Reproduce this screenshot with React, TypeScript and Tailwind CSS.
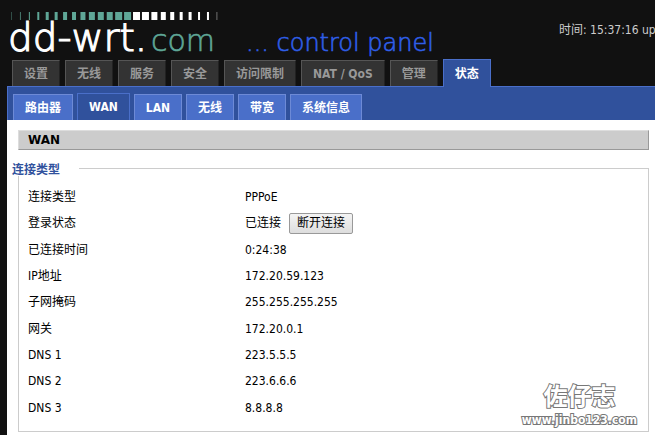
import React from "react";
import clsx from "clsx";

const mainTabs = ["设置", "无线", "服务", "安全", "访问限制", "NAT / QoS", "管理", "状态"];
const subTabs = ["路由器", "WAN", "LAN", "无线", "带宽", "系统信息"];

const rows = [
  { label: "连接类型", value: "PPPoE" },
  { label: "登录状态", value: "已连接", action: "断开连接" },
  { label: "已连接时间", value: "0:24:38" },
  { label: "IP地址", value: "172.20.59.123" },
  { label: "子网掩码", value: "255.255.255.255" },
  { label: "网关", value: "172.20.0.1" },
  { label: "DNS 1", value: "223.5.5.5" },
  { label: "DNS 2", value: "223.6.6.6" },
  { label: "DNS 3", value: "8.8.8.8" },
];

// widths of the bars above the logo, they swell towards the middle
const bars = [1, 1, 1, 2, 3, 3, 4, 4, 5, 6, 6, 6, 7, 7, 7, 7, 6, 5, 4, 3, 3, 2, 2, 1];

const Logo = () => (
  <svg
    className="shrink-0 font-['DejaVu_Sans',sans-serif] font-extralight"
    width="440"
    height="60"
    viewBox="0 0 440 60"
  >
    {bars.map((w, i) => (
      <rect
        key={i}
        x={11.5 + i * 8.93 - w / 2}
        y="12"
        width={w}
        height="8"
        fill={i < 14 ? "#5fa797" : "#fff"}
        opacity={i === 0 || i === 23 ? 0.4 : i === 1 ? 0.7 : 1}
      />
    ))}
    <text x="8" y="51" fontSize="39" fill="#fff" stroke="#fff" strokeWidth="1.2">
      dd-wrt.
    </text>
    <text x="151" y="51" fontSize="30" fill="#5fa797" stroke="#5fa797" strokeWidth="0.6">
      com
    </text>
    <text x="246" y="51" fontSize="24" fill="#2f5fe8" stroke="#2f5fe8" strokeWidth="0.6">
      ... control panel
    </text>
  </svg>
);

const MainNav = () => (
  <ul className="relative pl-3 h-[27px] -mb-px whitespace-nowrap flex items-end gap-[5px]">
    {mainTabs.map((tab) => (
      <li key={tab}>
        <a
          href="#"
          className={clsx(
            "block border-t border-l border-r px-[11px] font-bold",
            tab === "状态"
              ? "h-7 leading-7 bg-[#30519c] border-[#4a6fc9] text-white"
              : "h-[26px] mb-px leading-[26px] bg-[#333] border-t-[#555] border-l-[#555] border-r-[#222] text-[#999]"
          )}
        >
          {tab}
        </a>
      </li>
    ))}
  </ul>
);

const SubNav = () => (
  <ul className="flex items-end gap-1 h-[34px] pl-[5px] bg-[#30519c] border-t border-l border-[#4a6fc9] whitespace-nowrap">
    {subTabs.map((tab) => (
      <li key={tab}>
        <a
          href="#"
          className={clsx(
            "block border-t border-l border-r px-[11px] font-bold text-white",
            tab === "WAN"
              ? "h-[27px] leading-[26px] bg-[#30519c] border-[#4a6fc9]"
              : "h-[26px] leading-[26px] bg-[#4a6fc9] border-[#6d8ad6]"
          )}
        >
          {tab}
        </a>
      </li>
    ))}
  </ul>
);

export default function App() {
  return (
    <div className="relative min-h-screen overflow-hidden bg-[#111] pl-[7px] text-xs font-['DejaVu_Sans_Condensed','Noto_Sans_CJK_SC',sans-serif]">
      <header className="-ml-[7px] flex h-[60px] items-center">
        <Logo />
        <p className="ml-[119px] whitespace-nowrap text-[#ccc]">时间: 15:37:16 up</p>
      </header>
      <nav>
        <div className="-ml-[7px]">
          <MainNav />
        </div>
        <SubNav />
      </nav>
      <main className="min-h-[315px] bg-white pt-2.5 pl-[11px] pr-1.5 pb-1 text-black">
        <h2 className="h-5 border border-t-[#ddd] border-l-[#ddd] border-r-[#999] border-b-[#999] bg-[#ccc] pl-[9px] font-['DejaVu_Sans'] font-bold leading-[19px]">
          WAN
        </h2>
        <fieldset className="mt-2.5 border border-[#ccc] pl-[9px] pb-2.5">
          <legend className="-ml-4 h-4 w-[67px] bg-white font-bold leading-5 text-[#30519c]">连接类型</legend>
          <dl className="grid h-[237px] auto-rows-fr mt-2">
            {rows.map((row) => (
              <div key={row.label} className="flex items-center">
                <dt className="w-[217px] shrink-0">{row.label}</dt>
                <dd className="flex items-center gap-2">
                  {row.value}
                  {row.action && (
                    <button
                      type="button"
                      className="h-[21px] border border-[#999] rounded-xs bg-linear-to-b from-[#f4f4f4] to-[#ddd] px-[7px] leading-[19px]"
                    >
                      {row.action}
                    </button>
                  )}
                </dd>
              </div>
            ))}
          </dl>
        </fieldset>
      </main>
      {/* site mark */}
      <div className="absolute right-[18px] bottom-2 text-center font-bold text-white [-webkit-text-stroke:2px_#777] [paint-order:stroke_fill]">
        <p className="text-2xl leading-[30px]">佐仔志</p>
        <p className="text-xs leading-4">www.jinbo123.com</p>
      </div>
    </div>
  );
}
